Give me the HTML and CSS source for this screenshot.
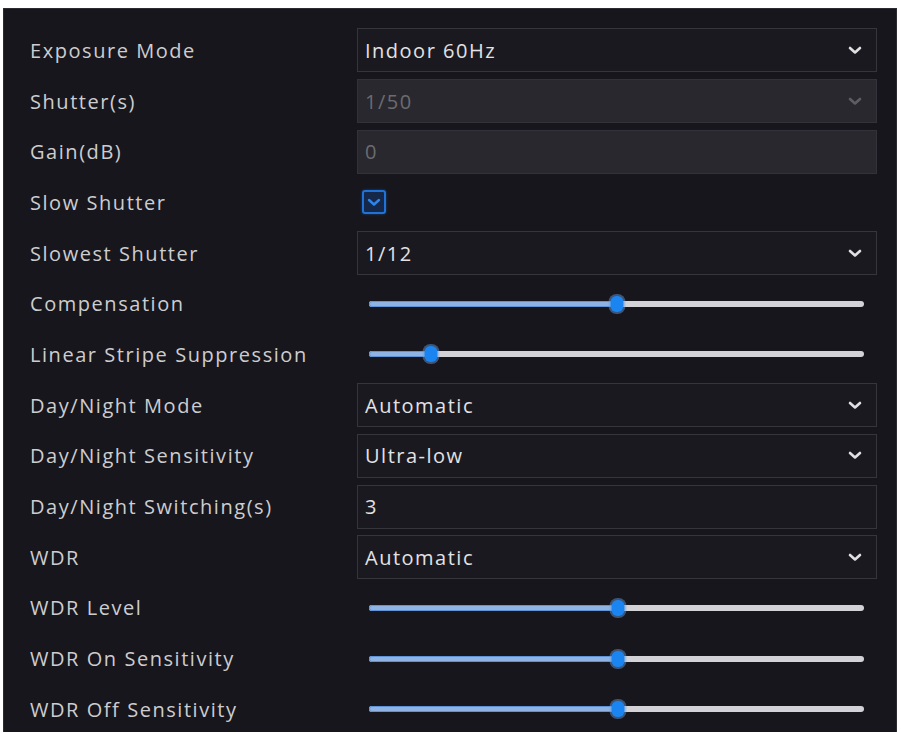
FILE: index.html
```html
<!DOCTYPE html>
<html>
<head>
<meta charset="utf-8">
<link rel="stylesheet" href="styles.css">
</head>
<body>
<div class="panel">
  <div class="row">
    <div class="label">Exposure Mode</div>
    <div class="select"><span class="value">Indoor 60Hz</span><svg class="chev" width="14" height="9" viewBox="0 0 14 9"><path d="M2 2 L7 6.5 L12 2"/></svg></div>
  </div>
  <div class="row">
    <div class="label">Shutter(s)</div>
    <div class="select disabled"><span class="value">1/50</span><svg class="chev" width="14" height="9" viewBox="0 0 14 9"><path d="M2 2 L7 6.5 L12 2"/></svg></div>
  </div>
  <div class="row">
    <div class="label">Gain(dB)</div>
    <div class="select disabled"><span class="value">0</span></div>
  </div>
  <div class="row">
    <div class="label">Slow Shutter</div>
    <div class="check-wrap"><span class="checkbox"><svg width="14" height="12" viewBox="0 0 14 12"><path d="M2 4 L7 8.5 L12 4"/></svg></span></div>
  </div>
  <div class="row">
    <div class="label">Slowest Shutter</div>
    <div class="select"><span class="value">1/12</span><svg class="chev" width="14" height="9" viewBox="0 0 14 9"><path d="M2 2 L7 6.5 L12 2"/></svg></div>
  </div>
  <div class="row">
    <div class="label">Compensation</div>
    <div class="slider"><div class="track"><div class="fill" style="width:50.1%"></div><span class="thumb" style="left:50.1%"></span></div></div>
  </div>
  <div class="row">
    <div class="label">Linear Stripe Suppression</div>
    <div class="slider"><div class="track"><div class="fill" style="width:12.5%"></div><span class="thumb" style="left:12.5%"></span></div></div>
  </div>
  <div class="row">
    <div class="label">Day/Night Mode</div>
    <div class="select"><span class="value">Automatic</span><svg class="chev" width="14" height="9" viewBox="0 0 14 9"><path d="M2 2 L7 6.5 L12 2"/></svg></div>
  </div>
  <div class="row">
    <div class="label">Day/Night Sensitivity</div>
    <div class="select"><span class="value">Ultra-low</span><svg class="chev" width="14" height="9" viewBox="0 0 14 9"><path d="M2 2 L7 6.5 L12 2"/></svg></div>
  </div>
  <div class="row">
    <div class="label">Day/Night Switching(s)</div>
    <div class="select"><span class="value">3</span></div>
  </div>
  <div class="row">
    <div class="label">WDR</div>
    <div class="select"><span class="value">Automatic</span><svg class="chev" width="14" height="9" viewBox="0 0 14 9"><path d="M2 2 L7 6.5 L12 2"/></svg></div>
  </div>
  <div class="row">
    <div class="label">WDR Level</div>
    <div class="slider"><div class="track"><div class="fill" style="width:50.3%"></div><span class="thumb" style="left:50.3%"></span></div></div>
  </div>
  <div class="row">
    <div class="label">WDR On Sensitivity</div>
    <div class="slider"><div class="track"><div class="fill" style="width:50.3%"></div><span class="thumb" style="left:50.3%"></span></div></div>
  </div>
  <div class="row">
    <div class="label">WDR Off Sensitivity</div>
    <div class="slider"><div class="track"><div class="fill" style="width:50.3%"></div><span class="thumb" style="left:50.3%"></span></div></div>
  </div>
</div>
</body>
</html>
```

FILE: styles.css
```css
html, body {
  margin: 0;
  padding: 0;
  background: #ffffff;
}

.panel {
  box-sizing: border-box;
  margin: 8px 0 0 3px;
  width: 894px;
  height: 724px;
  background: #17161c;
  border: 1px solid #2c2b31;
  border-bottom: none;
  padding: 16px 0 0 26px;
  overflow: hidden;
  font-family: "Open Sans", "Liberation Sans", sans-serif;
}

.row {
  display: grid;
  grid-template-columns: 327px 520px;
  height: 50.7px;
  align-items: center;
}

.label {
  color: #cdcdd0;
  font-size: 20px;
  font-weight: 500;
  letter-spacing: 1.55px;
  white-space: nowrap;
}

.select {
  box-sizing: border-box;
  height: 44px;
  border: 1px solid #36353c;
  background: #1a1920;
  display: flex;
  align-items: center;
  justify-content: space-between;
  padding: 0 14px 0 7px;
}

.value {
  color: #e2e2e4;
  font-size: 20px;
  font-weight: 500;
  letter-spacing: 1.5px;
}

.chev path {
  fill: none;
  stroke: #e0e0e2;
  stroke-width: 2.6;
  stroke-linecap: round;
  stroke-linejoin: round;
}

.select.disabled {
  background: #29282e;
  border-color: #33323a;
}

.select.disabled .value {
  color: #6c6b70;
}

.select.disabled .chev path {
  stroke: #5e5d63;
}

.check-wrap {
  display: flex;
  align-items: center;
  padding-left: 5px;
}

.checkbox {
  box-sizing: border-box;
  width: 24px;
  height: 24px;
  border: 2px solid #1f72d8;
  border-radius: 3px;
  background: #16284a;
  display: flex;
  align-items: center;
  justify-content: center;
  box-shadow: 0 0 3px rgba(30, 110, 220, 0.5);
}

.checkbox path {
  fill: none;
  stroke: #2a86ee;
  stroke-width: 2.4;
  stroke-linecap: round;
  stroke-linejoin: round;
}

.slider {
  padding: 0 13px 0 12px;
}

.track {
  position: relative;
  height: 6px;
  border-radius: 3px;
  background: #d3d3d7;
}

.fill {
  height: 100%;
  border-radius: 3px 0 0 3px;
  background: #8fb4e4;
  box-shadow: inset 0 0 0 1px #5f93d6;
}

.thumb {
  position: absolute;
  top: 50%;
  width: 13px;
  height: 16px;
  border-radius: 6px;
  background: #1a85f0;
  transform: translate(-50%, -50%);
  box-shadow: 0 0 0 2px rgba(110, 160, 225, 0.45);
}
```
